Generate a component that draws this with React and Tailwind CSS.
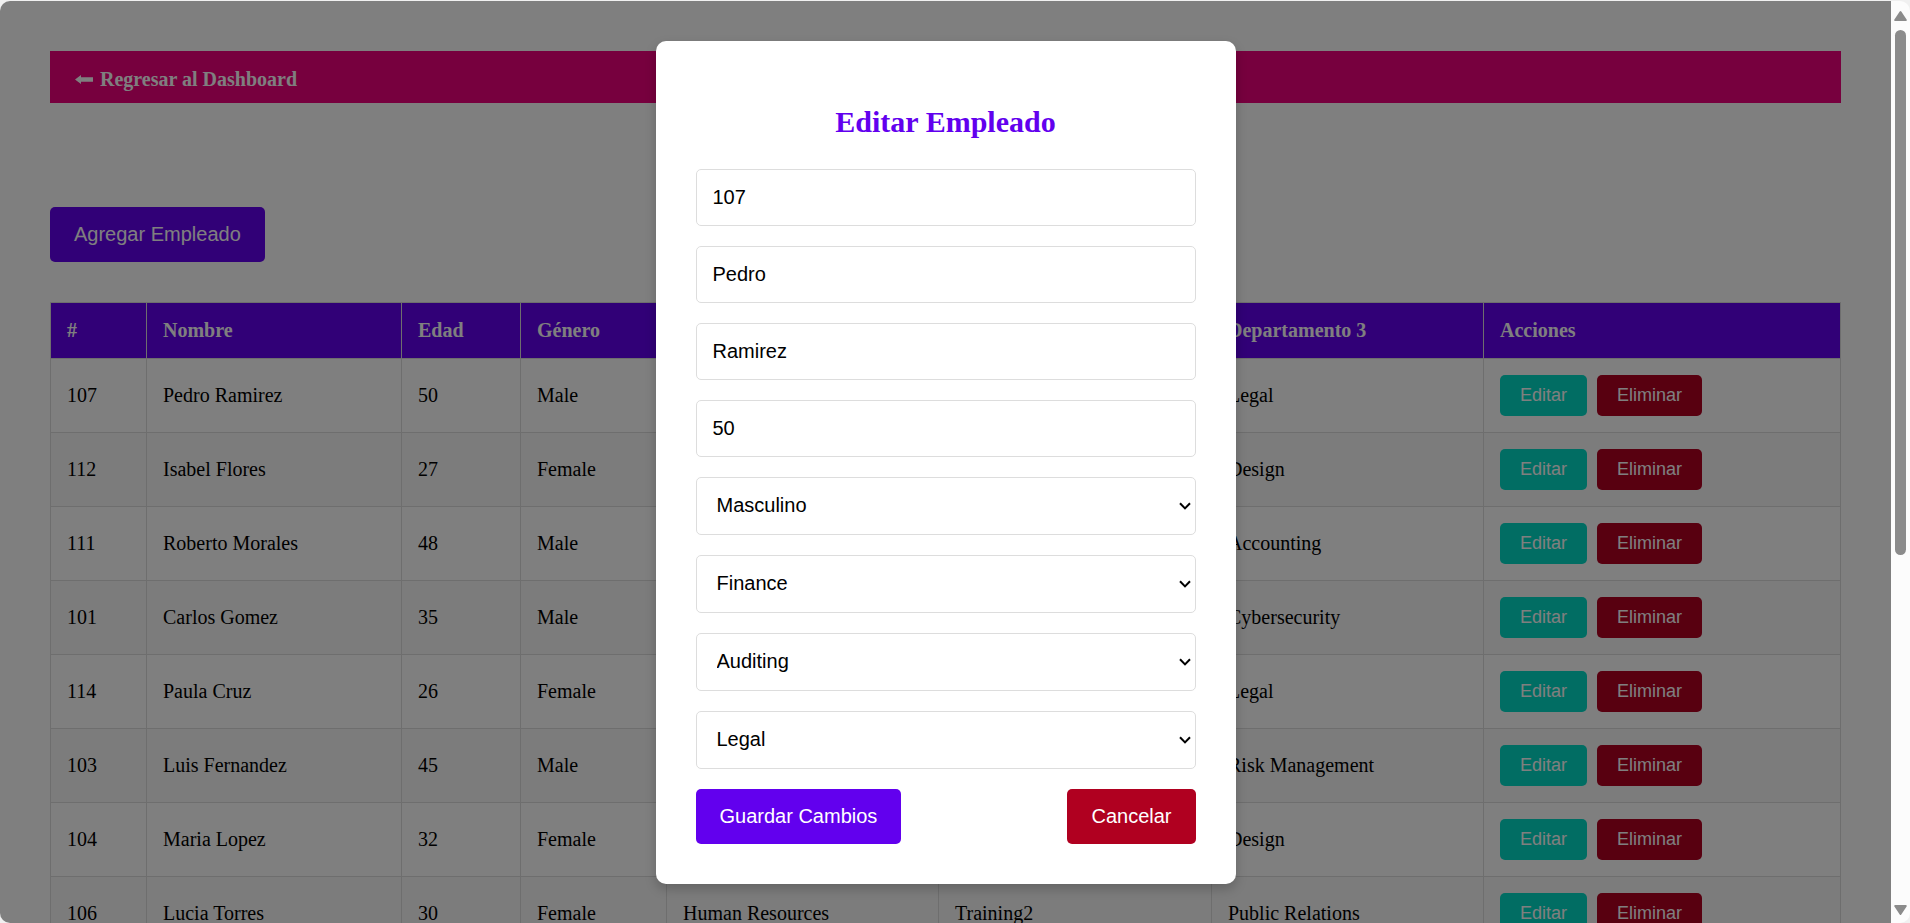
const employees = [
  { id: 107, name: "Pedro Ramirez", age: 50, gender: "Male", departments: ["Finance", "Auditing", "Legal"] },
  { id: 112, name: "Isabel Flores", age: 27, gender: "Female", departments: ["Marketing", "Advertising", "Design"] },
  { id: 111, name: "Roberto Morales", age: 48, gender: "Male", departments: ["Finance", "Auditing", "Accounting"] },
  { id: 101, name: "Carlos Gomez", age: 35, gender: "Male", departments: ["IT", "Development", "Cybersecurity"] },
  { id: 114, name: "Paula Cruz", age: 26, gender: "Female", departments: ["Human Resources", "Recruitment", "Legal"] },
  { id: 103, name: "Luis Fernandez", age: 45, gender: "Male", departments: ["Finance", "Auditing", "Risk Management"] },
  { id: 104, name: "Maria Lopez", age: 32, gender: "Female", departments: ["Marketing", "Advertising", "Design"] },
  { id: 106, name: "Lucia Torres", age: 30, gender: "Female", departments: ["Human Resources", "Training2", "Public Relations"] },
];

const columns = [
  { title: "#", width: "w-[96px]" },
  { title: "Nombre", width: "w-[255px]" },
  { title: "Edad", width: "w-[119px]" },
  { title: "Género", width: "w-[146px]" },
  { title: "Departamento 1", width: "w-[272px]" },
  { title: "Departamento 2", width: "w-[273px]" },
  { title: "Departamento 3", width: "w-[272px]" },
  { title: "Acciones", width: "w-[357px]" },
];

const textFields = [
  { id: "numero", label: "Número de empleado", value: "107" },
  { id: "nombre", label: "Nombre", value: "Pedro" },
  { id: "apellido", label: "Apellido", value: "Ramirez" },
  { id: "edad", label: "Edad", value: "50" },
];

const selectFields = [
  { id: "genero", label: "Género", options: ["Masculino", "Femenino"] },
  { id: "departamento1", label: "Departamento 1", options: ["Finance", "Marketing", "IT", "Human Resources"] },
  { id: "departamento2", label: "Departamento 2", options: ["Auditing", "Advertising", "Development", "Recruitment"] },
  { id: "departamento3", label: "Departamento 3", options: ["Legal", "Design", "Accounting", "Cybersecurity"] },
];

const sans = "font-['Liberation_Sans',Arial,sans-serif]";

function ArrowLeft() {
  return (
    <svg className="h-[9px] w-[18px]" viewBox="0 0 18 9" fill="currentColor" aria-hidden="true">
      <path d="M0 4.5 6 0V2.2H18V6.8H6V9Z" />
    </svg>
  );
}

function ChevronDown() {
  return (
    <svg
      className="pointer-events-none absolute inset-y-0 right-[5px] my-auto h-2 w-3"
      viewBox="0 0 12 8"
      fill="none"
      stroke="black"
      strokeWidth="2"
      aria-hidden="true"
    >
      <path d="M1 1.2 6 6.4 11 1.2" />
    </svg>
  );
}

function Button({ className, ...props }) {
  return <button type="button" className={`${sans} rounded-[5px] text-white ${className}`} {...props} />;
}

function EmployeeTable() {
  return (
    <table className="w-full table-fixed border-collapse border border-[#ddd] text-left">
      <colgroup>
        {columns.map((c) => (
          <col key={c.title} className={c.width} />
        ))}
      </colgroup>
      <thead>
        <tr className="bg-[#6200ee] text-white">
          {columns.map((c) => (
            <th key={c.title} className="border border-[#ddd] p-4 font-bold">{c.title}</th>
          ))}
        </tr>
      </thead>
      <tbody>
        {employees.map((e) => (
          <tr key={e.id} className="even:bg-[#f9f9f9]">
            {[e.id, e.name, e.age, e.gender, ...e.departments].map((value, i) => (
              <td key={i} className="border border-[#ddd] p-4">{value}</td>
            ))}
            <td className="border border-[#ddd] p-4">
              <div className="flex gap-[10px]">
                <Button className="bg-[#03dac6] px-5 py-[10px] text-[18px] leading-[21px]">Editar</Button>
                <Button className="bg-[#b00020] px-5 py-[10px] text-[18px] leading-[21px]">Eliminar</Button>
              </div>
            </td>
          </tr>
        ))}
      </tbody>
    </table>
  );
}

function EditDialog() {
  const field = `${sans} block w-full rounded-[5px] border border-[#ddd] bg-white text-[20px] leading-[23px] text-black`;
  return (
    <form
      role="dialog"
      aria-labelledby="titulo"
      className="w-[580px] max-w-full rounded-[10px] bg-white p-10 shadow-[0_5px_12px_rgba(0,0,0,0.2)]"
    >
      <h2 id="titulo" className="mt-6 mb-[30px] text-center text-[30px] leading-[34px] font-bold text-[#6200ee]">
        Editar Empleado
      </h2>
      <div className="flex flex-col gap-5">
        {textFields.map((f) => (
          <div key={f.id}>
            <label htmlFor={f.id} className="sr-only">{f.label}</label>
            <input id={f.id} type="text" defaultValue={f.value} className={`${field} h-[57px] px-4`} />
          </div>
        ))}
        {selectFields.map((f) => (
          <div key={f.id} className="relative">
            <label htmlFor={f.id} className="sr-only">{f.label}</label>
            <select id={f.id} defaultValue={f.options[0]} className={`${field} h-[58px] appearance-none px-5`}>
              {f.options.map((o) => (
                <option key={o}>{o}</option>
              ))}
            </select>
            <ChevronDown />
          </div>
        ))}
        <div className="flex justify-between">
          <Button className="bg-[#6200ee] px-6 py-4 text-[20px] leading-[23px]">Guardar Cambios</Button>
          <Button className="bg-[#b00020] px-6 py-4 text-[20px] leading-[23px]">Cancelar</Button>
        </div>
      </div>
    </form>
  );
}

function ScrollRail() {
  return (
    <div className="flex w-[19px] shrink-0 flex-col items-center bg-[#fcfcfc] pt-[10px] pb-2 text-[#8b8b8b]" aria-hidden="true">
      <svg className="h-[10px] w-[13px] shrink-0" viewBox="0 0 13 10" fill="currentColor">
        <path d="M5.7.6a1 1 0 0 1 1.6 0l5.3 7.8a1 1 0 0 1-.8 1.6H1.2a1 1 0 0 1-.8-1.6Z" />
      </svg>
      <div className="mt-[9px] flex w-[11px] flex-1 flex-col">
        <div className="h-[60%] rounded-full bg-[#8b8b8b]" />
      </div>
      <svg className="h-[10px] w-[13px] shrink-0 rotate-180" viewBox="0 0 13 10" fill="currentColor">
        <path d="M5.7.6a1 1 0 0 1 1.6 0l5.3 7.8a1 1 0 0 1-.8 1.6H1.2a1 1 0 0 1-.8-1.6Z" />
      </svg>
    </div>
  );
}

export default function App() {
  return (
    <div className="h-screen bg-[#f0f0f0] pt-px font-['Liberation_Serif','Times_New_Roman',serif] text-[20px] leading-[23px] text-black">
      <div className="flex h-full overflow-hidden rounded-[10px]">
        <div className="relative min-w-0 flex-1 overflow-hidden bg-white">
          <main className="p-[50px]">
            <nav className="bg-[#ee007c] px-[25px] pt-[17px] pb-3">
              <a href="#dashboard" className="inline-flex items-center gap-[7px] align-top font-bold text-white">
                <ArrowLeft />
                Regresar al Dashboard
              </a>
            </nav>
            <Button className="mt-[104px] mb-10 block bg-[#6200ee] px-6 py-4 text-[20px] leading-[23px]">Agregar Empleado</Button>
            <EmployeeTable />
          </main>
          <div className="absolute inset-0 flex items-center justify-center bg-black/50">
            <EditDialog />
          </div>
        </div>
        <ScrollRail />
      </div>
    </div>
  );
}
